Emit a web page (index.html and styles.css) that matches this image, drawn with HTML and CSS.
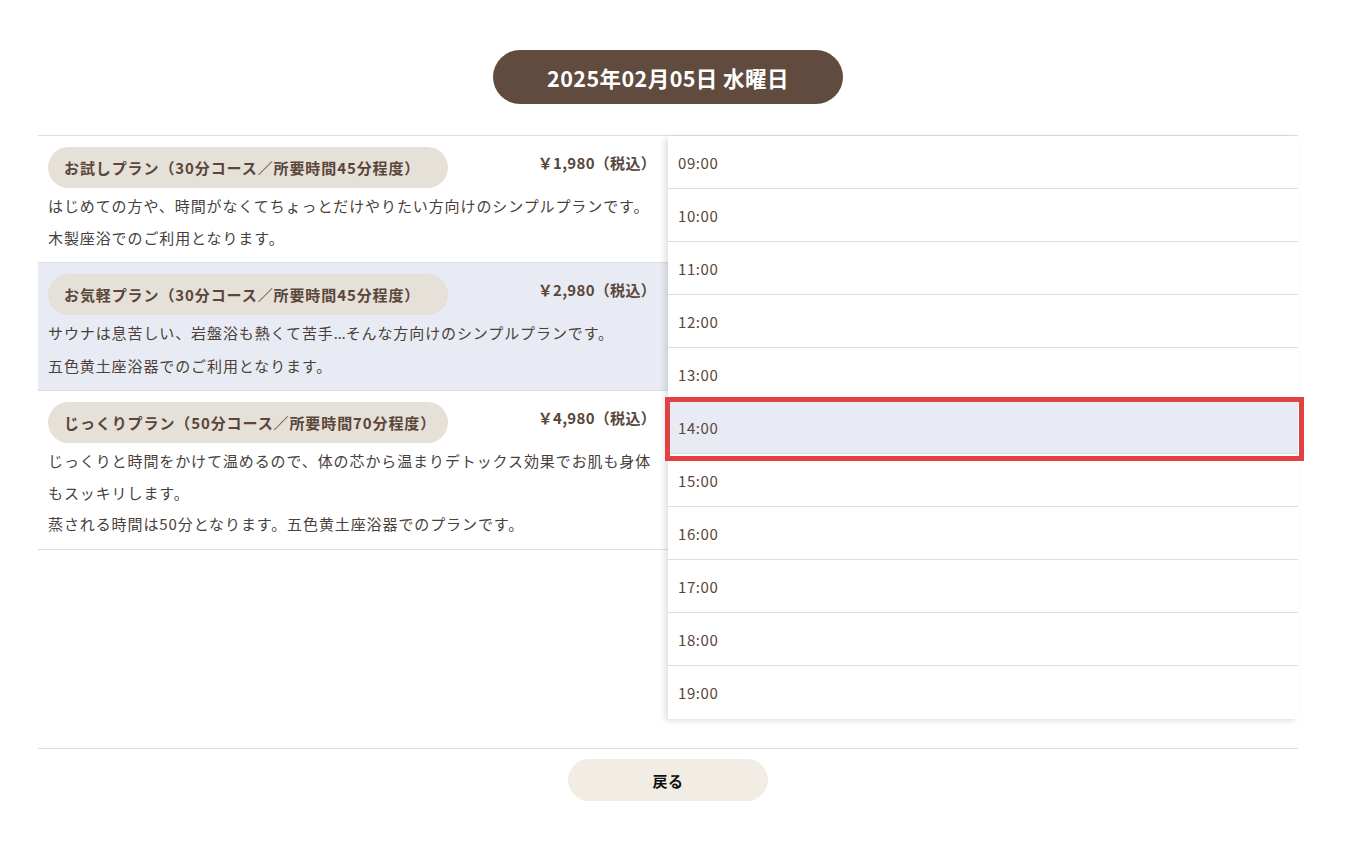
FILE: index.html
```html
<!DOCTYPE html>
<html lang="ja">
<head>
<meta charset="utf-8">
<title>予約</title>
<link rel="stylesheet" href="styles.css">
</head>
<body>
<div class="page">
  <div class="date-wrap"><div class="date-pill">2025年02月05日 水曜日</div></div>
  <div class="board">
    <div class="plans">
      <div class="plan">
        <div class="plan-head">
          <div class="plan-name">お試しプラン（30分コース／所要時間45分程度）</div>
          <div class="plan-price">￥1,980（税込）</div>
        </div>
        <p class="plan-desc">はじめての方や、時間がなくてちょっとだけやりたい方向けのシンプルプランです。<br>木製座浴でのご利用となります。</p>
      </div>
      <div class="plan plan-active">
        <div class="plan-head">
          <div class="plan-name">お気軽プラン（30分コース／所要時間45分程度）</div>
          <div class="plan-price">￥2,980（税込）</div>
        </div>
        <p class="plan-desc">サウナは息苦しい、岩盤浴も熱くて苦手<span class="ellipsis">…</span>そんな方向けのシンプルプランです。<br>五色黄土座浴器でのご利用となります。</p>
      </div>
      <div class="plan">
        <div class="plan-head">
          <div class="plan-name">じっくりプラン（50分コース／所要時間70分程度）</div>
          <div class="plan-price">￥4,980（税込）</div>
        </div>
        <p class="plan-desc">じっくりと時間をかけて温めるので、体の芯から温まりデトックス効果でお肌も身体もスッキリします。<br>蒸される時間は50分となります。五色黄土座浴器でのプランです。</p>
      </div>
    </div>
    <ul class="times">
      <li class="time">09:00</li>
      <li class="time">10:00</li>
      <li class="time">11:00</li>
      <li class="time">12:00</li>
      <li class="time">13:00</li>
      <li class="time time-selected">14:00</li>
      <li class="time">15:00</li>
      <li class="time">16:00</li>
      <li class="time">17:00</li>
      <li class="time">18:00</li>
      <li class="time">19:00</li>
    </ul>
  </div>
  <div class="footer">
    <button class="back-btn" type="button">戻る</button>
  </div>
</div>
</body>
</html>
```

FILE: styles.css
```css
* { box-sizing: border-box; }
html, body { margin: 0; padding: 0; background: #fff; }
body {
  font-family: "Noto Sans CJK JP", "Noto Sans", sans-serif;
  color: #4a4039;
  font-size: 15px;
  letter-spacing: 0.06em;
}
.page {
  width: 1260px;
  margin-left: 38px;
  padding-top: 50px;
}
.date-wrap { display: flex; justify-content: center; }
.date-pill {
  width: 350px;
  height: 54px;
  border-radius: 27px;
  background: #614b3f;
  color: #fff;
  font-weight: 700;
  font-size: 21.5px;
  display: flex;
  align-items: center;
  justify-content: center;
  letter-spacing: 0.02em;
}
.board {
  margin-top: 31px;
  border-top: 1px solid #dedede;
  display: flex;
  align-items: flex-start;
}
.plans { width: 630px; }
.plan {
  border-bottom: 1px solid #dedede;
  padding: 11px 8px 9px 10px;
}
.plan-active { background: #e8ebf3; }
.plan-head {
  display: flex;
  justify-content: space-between;
  align-items: flex-start;
}
.plan-name {
  width: 400px;
  height: 41px;
  border-radius: 21px;
  background: #e5e0d8;
  padding: 0 16px;
  display: flex;
  align-items: center;
  font-weight: 700;
  color: #5a463a;
  white-space: nowrap;
}
.plan-price {
  margin-top: 5px;
  margin-right: 4px;
  font-weight: 700;
  color: #5a463a;
  white-space: nowrap;
  letter-spacing: 0.02em;
}
.plan-desc {
  margin: 2px 0 0;
  line-height: 31.5px;
}
.ellipsis {
  font-family: "Noto Sans", sans-serif;
  letter-spacing: 0;
}
.times {
  list-style: none;
  margin: 0;
  padding: 0;
  width: 630px;
  background: #fff;
  box-shadow: -3px 2px 6px rgba(0,0,0,0.13);
}
.time {
  height: 53px;
  border-bottom: 1px solid #dedede;
  padding-left: 10px;
  display: flex;
  align-items: center;
  color: #5a463a;
  letter-spacing: 0.04em;
}
.time:last-child { border-bottom: none; }
.time-selected {
  background: #e8ebf3;
  position: relative;
}
.time-selected::after {
  content: "";
  position: absolute;
  top: -4px;
  bottom: -8px;
  left: -3px;
  right: -6px;
  border: 5px solid #e24141;
}
.footer {
  margin-top: 29px;
  border-top: 1px solid #dedede;
  padding-top: 10px;
  display: flex;
  justify-content: center;
}
.back-btn {
  width: 200px;
  height: 42px;
  border: none;
  border-radius: 21px;
  background: #f1ece4;
  font-family: inherit;
  font-size: 15px;
  font-weight: 700;
  color: #111;
  letter-spacing: 0.04em;
  cursor: pointer;
}
```
